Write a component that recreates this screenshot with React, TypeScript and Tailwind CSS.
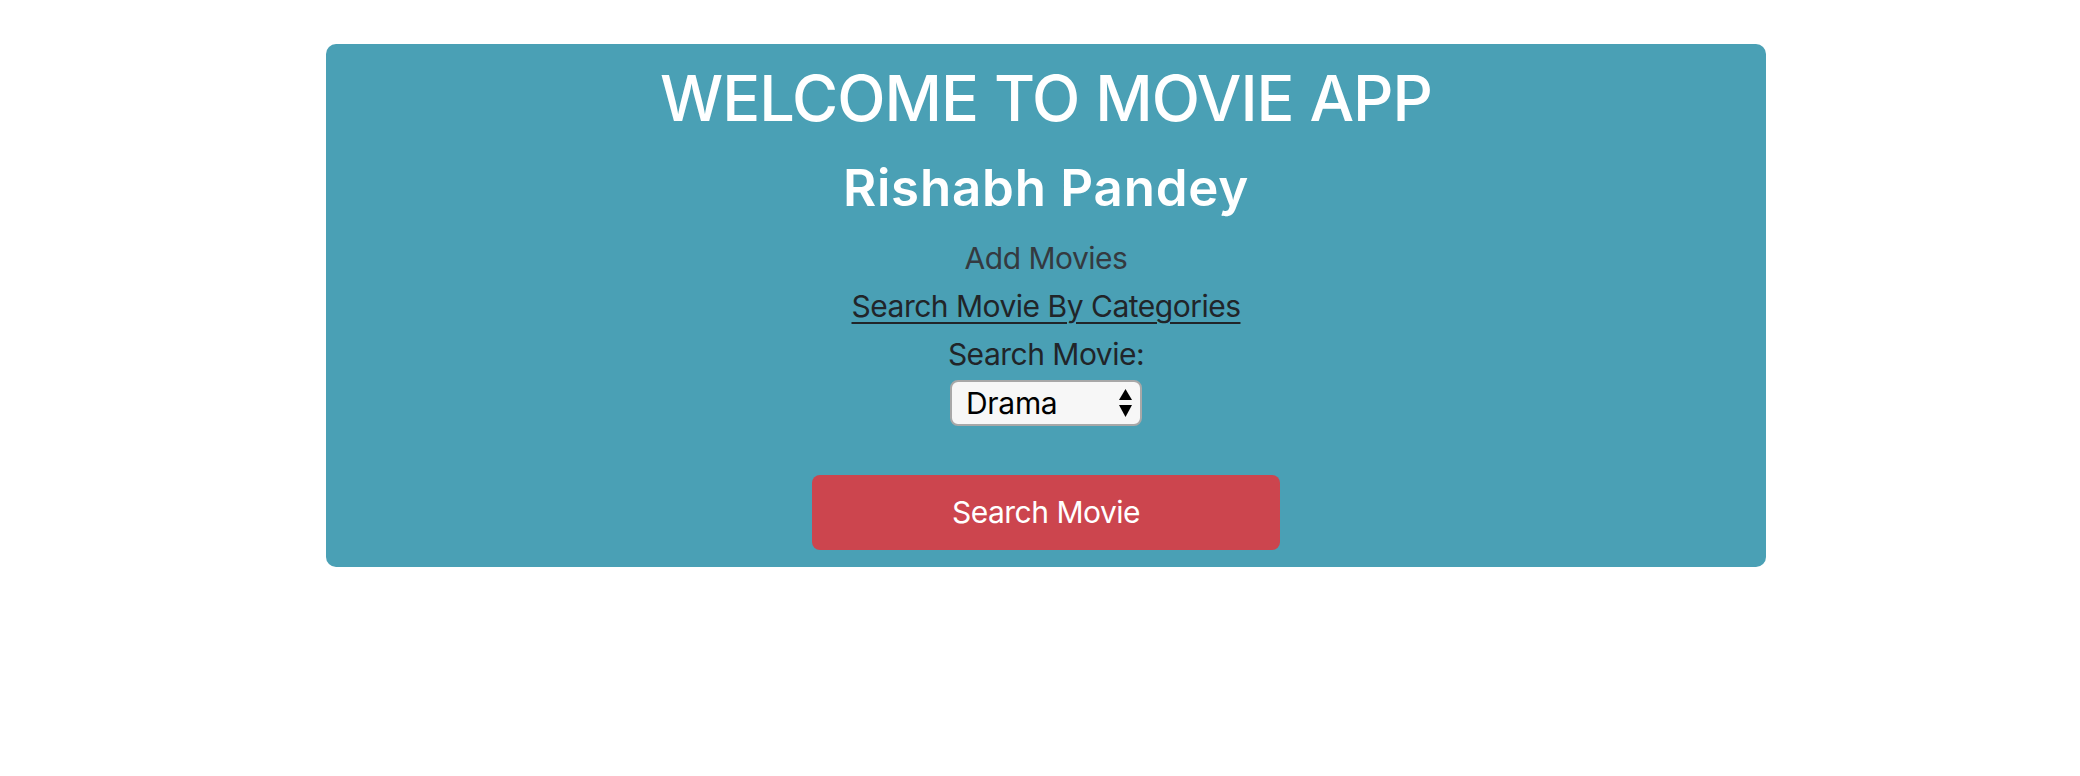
import { useState } from 'react';

const categories = ['Drama', 'Action', 'Comedy', 'Horror', 'Romance', 'Thriller'];

export default function App() {
  const [category, setCategory] = useState('Drama');

  return (
    <main className="min-h-screen bg-white font-['Inter','Liberation_Sans',sans-serif]">
      <div className="w-[1440px] ml-[326px] pt-[44px]">
        <div className="bg-[#4aa0b5] rounded-[10px] pt-[17px] pb-[17px] flex flex-col items-center text-center">
          <h1 className="text-[63px] leading-[1.2] font-medium tracking-[-1px] text-white mb-[20px]">WELCOME TO MOVIE APP</h1>
          <h2 className="text-[51px] leading-[1.2] font-semibold tracking-[0.8px] text-white mb-[16px]">Rishabh Pandey</h2>

          <p className="text-[30px] leading-[48px] tracking-[-0.5px] text-[#343a40]">Add Movies</p>
          <a href="#" className="text-[30px] leading-[48px] tracking-[-0.5px] text-[#212529] underline underline-offset-[5px] decoration-2">
            Search Movie By Categories
          </a>

          {/* 類別選擇 */}
          <label htmlFor="category" className="text-[30px] leading-[48px] tracking-[-0.5px] text-[#212529]">Search Movie:</label>
          <div className="relative w-[192px] h-[46px] mt-[2px]">
            <select
              id="category"
              value={category}
              onChange={(e) => setCategory(e.target.value)}
              className="appearance-none w-full h-full bg-[#f7f7f7] border-2 border-[#a8a8a8] rounded-[8px] pl-[14px] text-[30px] leading-none tracking-[-0.3px] text-black outline-none"
            >
              {categories.map((c) => (
                <option key={c} value={c}>{c}</option>
              ))}
            </select>
            <svg className="absolute right-[10px] top-[9px] pointer-events-none" width="13" height="28" viewBox="0 0 13 28">
              <path d="M6.5 0 L13 11 L0 11 Z" fill="#000" />
              <path d="M0 16 L13 16 L6.5 28 Z" fill="#000" />
            </svg>
          </div>

          <button className="mt-[49px] w-[468px] h-[75px] bg-[#cc454e] rounded-[8px] text-white text-[30px] tracking-[-0.5px]">
            Search Movie
          </button>
        </div>
      </div>
    </main>
  );
}
